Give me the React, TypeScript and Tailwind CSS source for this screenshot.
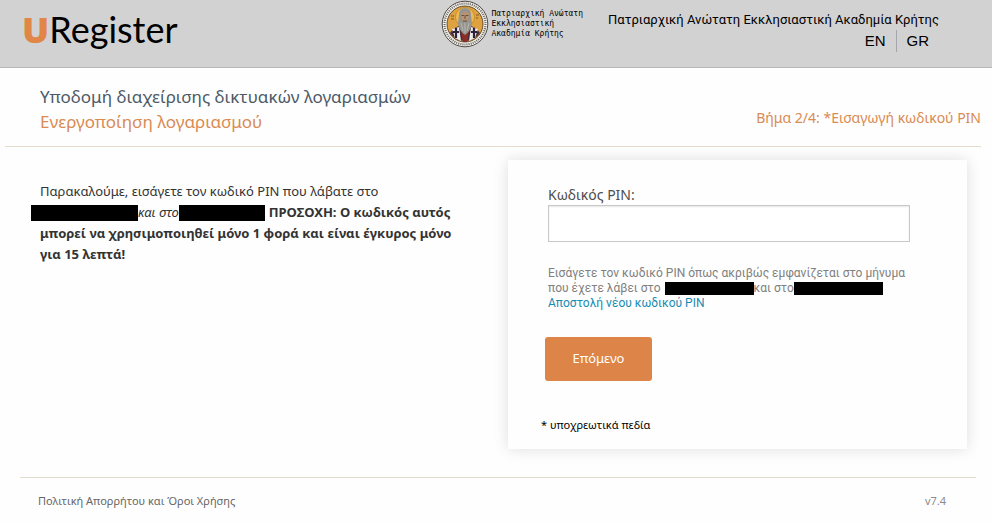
import React from "react";

function Redacted({ className }: { className: string }) {
  return <span aria-hidden="true" className={`inline-block shrink-0 bg-black ${className}`} />;
}

function Seal() {
  return (
    <svg viewBox="0 0 48 48" className="size-12 shrink-0" role="img" aria-label="Έμβλημα Ακαδημίας">
      <circle cx="24" cy="24" r="22.800" fill="#f7f5f0" stroke="#3d3935" strokeWidth="0.9" />
      <circle cx="24" cy="24" r="20.500" fill="none" stroke="#6f6a65" strokeWidth="2.2" strokeDasharray="1.1 1" />
      <circle cx="24" cy="24" r="18" fill="#dfa23e" stroke="#3a2d20" strokeWidth="0.8" />
      <path d="M9 33Q12 28 18 26L30 26Q36 28 39 33A18 18 0 0 1 9 33Z" fill="#4b2c3c" />
      <path d="M11 29l7-2 2 14-6-3z M30 27l7 2-3 9-6 3z" fill="#eeebe6" />
      <path d="M12 32h6M15 28v10M30 32h6M33 28v10" stroke="#29243b" strokeWidth="2.2" />
      <path d="M20 31h8l-2 11h-4z" fill="#8a2f28" />
      <circle cx="24" cy="17" r="9.500" fill="#edbb50" stroke="#b98232" strokeWidth="0.7" />
      <path d="M18 15Q18 8 24 8Q30 8 30 15L31 24Q29 32 24 35Q19 32 17 24Z" fill="#96948f" />
      <path d="M20 14Q24 9 28 14L27 20Q24 23 21 20Z" fill="#b99373" />
      <path d="M20.500 15.500h2.500M25 15.500h2.500M24 15v4M22 21h4" stroke="#54402f" strokeWidth="0.8" />
      <path d="M20 23l2 8M24 23v10M28 23l-2 8" stroke="#c3c1bb" strokeWidth="0.8" />
      <path d="M10 16h3M10 19h3M35 15h3M35 18h2" stroke="#7c5127" strokeWidth="0.9" />
    </svg>
  );
}

function Header() {
  return (
    <header className="flex h-[68px] border-b border-[#b8b8b8] bg-[#d2d2d2] text-black">
      <div className="flex w-[44.5%] items-baseline pt-[7px] pl-[22px] font-['Lato',sans-serif] text-[36px] leading-[44px]">
        <span className="font-['Noto_Sans',sans-serif] font-black text-[#e08748]">U</span>
        <span>Register</span>
      </div>
      <div className="flex items-start gap-[2px]">
        <Seal />
        <p className="pt-[9px] font-['DejaVu_Sans_Mono',monospace] text-[8px] leading-[10px] whitespace-nowrap">
          Πατριαρχική Ανώτατη
          <br />
          Εκκλησιαστική
          <br />
          Ακαδημία Κρήτης
        </p>
      </div>
      <div className="ml-auto flex flex-col items-end pt-[10px] pr-[53px]">
        <p className="font-['Roboto',sans-serif] text-[13px] leading-5 whitespace-nowrap">
          Πατριαρχική Ανώτατη Εκκλησιαστική Ακαδημία Κρήτης
        </p>
        <nav className="flex font-['Liberation_Sans',sans-serif] text-[15px] leading-[22px]">
          <a href="#en" className="border-r border-[#a5a5ae] px-[10px]">EN</a>
          <a href="#gr" className="px-[10px]">GR</a>
        </nav>
      </div>
    </header>
  );
}

export default function App() {
  return (
    <div className="min-h-screen bg-[#fefefe] font-['Noto_Sans',sans-serif] text-[#333]">
      <Header />
      <div className="mr-[11px] ml-[5px] flex items-end justify-between border-b border-[#e6dccb] pt-4 pb-3">
        <h1 className="pl-[35px] text-[17px] leading-[25px] text-[#4d5a67]">
          Υποδομή διαχείρισης δικτυακών λογαριασμών
          <br />
          <span className="text-[#d98b53]">Ενεργοποίηση λογαριασμού</span>
        </h1>
        <h2 className="pb-1 text-sm leading-[25px] text-[#d98b53]">Βήμα 2/4: *Εισαγωγή κωδικού PIN</h2>
      </div>

      <main className="flex items-start justify-between pr-[25px] pl-10">
        <div className="pt-[34px] text-[13px] leading-[21px]">
          <p>Παρακαλούμε, εισάγετε τον κωδικό PIN που λάβατε στο</p>
          <p className="-ml-[9px] flex items-center whitespace-nowrap">
            <Redacted className="h-4 w-[107px]" />
            <em>και στο</em>
            <Redacted className="mr-1 h-4 w-[86px]" />
            <strong>ΠΡΟΣΟΧΗ: Ο κωδικός αυτός</strong>
          </p>
          <p className="font-bold">
            μπορεί να χρησιμοποιηθεί μόνο 1 φορά και είναι έγκυρος μόνο
            <br />
            για 15 λεπτά!
          </p>
        </div>

        <form
          className="mt-[13px] w-[459px] bg-[#fefefe] px-[33px] pt-[25px] pb-4 shadow-[0_0_14px_rgba(0,0,0,0.13)]"
          onSubmit={(e) => e.preventDefault()}
        >
          <div className="pr-6 pl-[7px]">
            <label htmlFor="pin" className="block text-sm leading-5 text-[#4d4d4d]">
              Κωδικός PIN:
            </label>
            <input
              id="pin"
              type="text"
              className="block h-[37px] w-full border border-[#c8c8c8] bg-white px-2 shadow-[inset_0_1px_2px_rgba(0,0,0,0.1)]"
            />
            <div className="pt-6 font-['Roboto',sans-serif] text-xs leading-[15px] whitespace-nowrap text-[#808080]">
              <p>Εισάγετε τον κωδικό PIN όπως ακριβώς εμφανίζεται στο μήνυμα</p>
              <p className="flex items-center">
                <span>που έχετε λάβει στο</span>
                <Redacted className="ml-1 h-[13px] w-[89px]" />
                <span>και στο</span>
                <Redacted className="h-[13px] w-[89px]" />
              </p>
              <a href="#resend" className="block text-[#178bb0]">Αποστολή νέου κωδικού PIN</a>
            </div>
          </div>
          <button type="submit" className="mt-[26px] ml-1 block h-11 w-[107px] rounded-[3px] bg-[#dd8548] text-[13px] text-white">
            Επόμενο
          </button>
          <p className="pt-[36px] text-[11px] leading-4 text-black">* υποχρεωτικά πεδία</p>
        </form>
      </main>

      <footer className="mt-[28px] mr-[16px] ml-5 flex justify-between border-t border-[#e2dccf] pt-[14px] pr-[30px] pl-[18px] text-[11px] leading-[18px]">
        <a href="#privacy" className="text-[#666]">Πολιτική Απορρήτου και Όροι Χρήσης</a>
        <span className="text-[#8b8b8b]">v7.4</span>
      </footer>
    </div>
  );
}
